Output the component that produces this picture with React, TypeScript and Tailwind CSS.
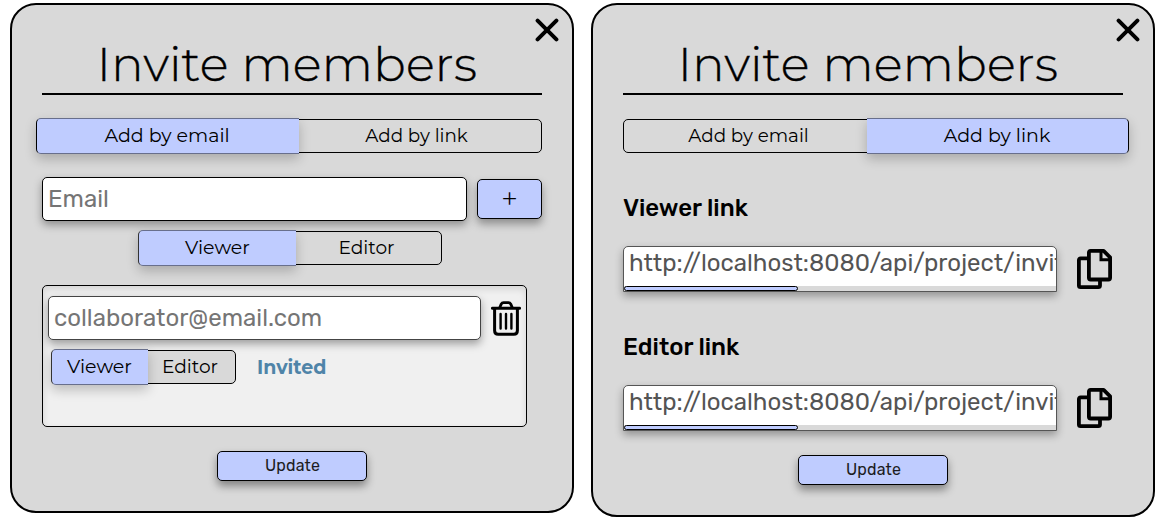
import type { ReactNode } from "react";

const heading = "font-['Montserrat','Inter',sans-serif]";
const body = "font-['Rubik','Roboto',sans-serif]";

function CloseIcon() {
  return (
    <svg className="h-6 w-6" viewBox="0 0 24 24" fill="none" stroke="#000" strokeWidth="4" strokeLinecap="round">
      <path d="M2.6 2.6 21.4 21.4M21.4 2.6 2.6 21.4" />
    </svg>
  );
}

function TrashIcon() {
  return (
    <svg className="h-[35px] w-[30px]" viewBox="0 0 30 35" fill="none" stroke="#000">
      <path d="M1.4 7.3H28.6" strokeWidth="2.9" strokeLinecap="round" />
      <path d="M8.6 7 10.2 3.2Q11 1.6 12.6 1.6H17.4Q19 1.6 19.8 3.2L21.4 7" strokeWidth="2.8" />
      <path d="M3.6 8V29.5Q3.6 33.3 7.2 33.3H22.8Q26.4 33.3 26.4 29.5V8" strokeWidth="3" />
      <path d="M9.6 13V27.5M15 13V27.5M20.4 13V27.5" strokeWidth="2.4" strokeLinecap="round" />
    </svg>
  );
}

function CopyIcon() {
  return (
    <svg className="h-10 w-[35px]" viewBox="0 0 35 40" fill="none" stroke="#000" strokeWidth="3.8" strokeLinejoin="round">
      <path d="M11 9.4H3.6Q1.9 9.4 1.9 11V36.5Q1.9 38.1 3.6 38.1H21.3Q23 38.1 23 36.5V31" />
      <path d="M13.6 1.9H26.6L33.1 8.4V28.8Q33.1 30.5 31.4 30.5H13.6Q11.9 30.5 11.9 28.8V3.6Q11.9 1.9 13.6 1.9Z" />
      <path d="M24 2.5V10.7H32.5" strokeWidth="3" strokeLinejoin="miter" />
    </svg>
  );
}

function Panel({ className, children }: { className: string; children: ReactNode }) {
  return (
    <section className={`relative flex w-[564px] shrink-0 flex-col rounded-[26px] border-2 border-black bg-[#d9d9d9] px-[30px] ${className}`}>
      <button aria-label="Close" className="absolute top-[13px] right-[13px]">
        <CloseIcon />
      </button>
      <h1 className={`${heading} mt-[30px] h-[60px] border-b-2 border-black pr-[10px] text-center text-[48px] leading-[58px] font-light tracking-[0.32px] whitespace-nowrap [-webkit-text-stroke:0.4px_#000]`}>
        Invite members
      </h1>
      {children}
    </section>
  );
}

function Segment({ active, className, children }: { active?: boolean; className: string; children: string }) {
  return (
    <button
      className={`${heading} flex shrink-0 items-center justify-center whitespace-nowrap ${
        active ? "relative -my-[2px] h-9 border-y border-y-[#686f8c] bg-[#bfccff] shadow-[0_5px_12px_rgba(0,0,0,0.22)]" : "h-8"
      } ${className}`}
    >
      {children}
    </button>
  );
}

function UpdateButton({ className }: { className: string }) {
  return (
    <button className={`${body} flex h-[30px] w-[150px] shrink-0 items-center justify-center self-center rounded-[5px] border border-black bg-[#bfccff] pl-px text-[16px] tracking-[0.15px] text-[#1c1c22] shadow-[0_5px_8px_rgba(0,0,0,0.4)] ${className}`}>
      Update
    </button>
  );
}

function ShareLink({ label, className }: { label: string; className: string }) {
  return (
    <div className={`${body} flex flex-col ${className}`}>
      <h2 className="h-[30px] text-[24px] leading-[30px] font-medium">{label}</h2>
      <div className="mt-[23px] flex items-center">
        <div className="flex h-[46px] w-[434px] flex-col overflow-hidden rounded-t-[5px] border border-[#555] bg-white shadow-[0_4px_8px_rgba(0,0,0,0.33)]">
          <div className="h-[39px] overflow-hidden pl-[5px] text-[24px] leading-[33px] whitespace-nowrap text-[#545454]">
            http://localhost:8080/api/project/invite
          </div>
          <div className="h-[5px] bg-[#d9d9d9]">
            <div className="h-[5px] w-[174px] rounded-[3px] border border-black bg-[#bfccff]" />
          </div>
        </div>
        <button aria-label="Copy" className="ml-5">
          <CopyIcon />
        </button>
      </div>
    </div>
  );
}

export default function App() {
  return (
    <main className="flex h-[518px] w-[1161px] items-start gap-[17px] overflow-hidden bg-white pt-[3px] pl-[10px] text-black">
      <Panel className="h-[510px]">
        <div className="mt-6 flex h-[34px] rounded-[5px] border border-black">
          <Segment active className="-ml-[7px] w-[263px] rounded-l-[5px] border-l border-l-black pr-[2px] text-[19px]">Add by email</Segment>
          <Segment className="w-[236px] pr-px text-[18.3px]">Add by link</Segment>
        </div>
        <div className="mt-6 flex items-center gap-[10px]">
          <input placeholder="Email" className={`${body} h-11 w-[425px] rounded-[5px] border border-black bg-white px-[5px] text-[24px] shadow-[0_4px_8px_rgba(0,0,0,0.35)] placeholder:text-[#757575]`} />
          <button className={`${heading} h-10 w-[65px] rounded-[5px] border border-black bg-[#bfccff] text-[30px] leading-[38px] font-light shadow-[0_5px_8px_rgba(0,0,0,0.35)]`}>+</button>
        </div>
        <div className="mt-[10px] ml-24 flex h-[34px] w-[304px] rounded-[5px] border border-black">
          <Segment active className="-ml-px w-[158px] rounded-l-[5px] border-l border-l-[#333] text-[19px]">Viewer</Segment>
          <Segment className="w-[141px] text-[18.6px]">Editor</Segment>
        </div>
        <div className="mt-5 flex h-[142px] w-[485px] shrink-0 flex-col rounded-[5px] border border-black bg-[#f0f0f0] pt-[10px] pl-[5px] shadow-[inset_0_3px_7px_rgba(0,0,0,0.12)]">
          <div className="flex items-center gap-[10px]">
            <input placeholder="collaborator@email.com" className={`${body} h-11 w-[433px] rounded-[5px] border border-[#444] bg-white px-[5px] text-[24px] shadow-[0_4px_8px_rgba(0,0,0,0.35)] placeholder:text-[#757575]`} />
            <button aria-label="Remove">
              <TrashIcon />
            </button>
          </div>
          <div className="mt-[10px] ml-[3px] flex items-center gap-[21px]">
            <div className="flex h-[34px] w-[185px] rounded-[5px] border border-black bg-[#d9d9d9]">
              <Segment active className="-ml-px w-[97px] rounded-l-[5px] border-l border-l-[#333] pr-px text-[19px]">Viewer</Segment>
              <Segment className="w-[84px] text-[18.6px]">Editor</Segment>
            </div>
            <span className={`${heading} pt-[2px] text-[19px] font-bold text-[#4f84a8]`}>Invited</span>
          </div>
        </div>
        <UpdateButton className="mt-6" />
      </Panel>

      <Panel className="h-[514px]">
        <div className="mt-6 flex h-[34px] rounded-[5px] border border-black">
          <Segment className="w-[243px] pl-[6px] text-[18.3px]">Add by email</Segment>
          <Segment active className="w-[262px] rounded-r-[5px] border-r border-r-black pr-px text-[19px]">Add by link</Segment>
        </div>
        <ShareLink label="Viewer link" className="mt-10" />
        <ShareLink label="Editor link" className="mt-10" />
        <UpdateButton className="mt-6" />
      </Panel>
    </main>
  );
}
